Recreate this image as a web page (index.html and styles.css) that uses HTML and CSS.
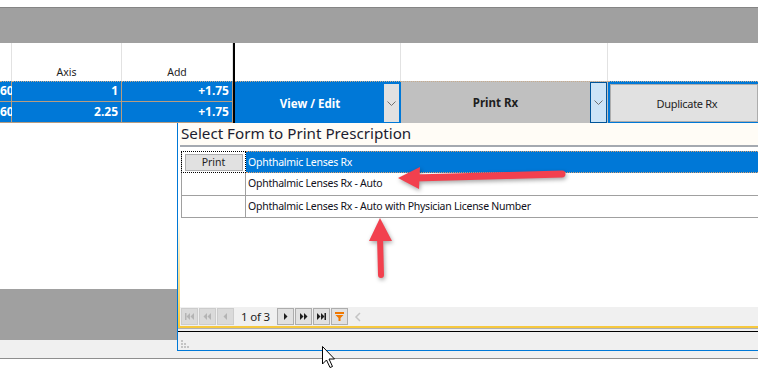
FILE: index.html
```html
<!DOCTYPE html>
<html lang="en">
<head>
  <meta charset="UTF-8">
  <meta name="viewport" content="width=device-width, initial-scale=1.0">
  <title>Select Form to Print Prescription</title>
  <link rel="stylesheet" href="styles.css">
</head>
<body>
  <div class="screen">
    <div class="top-gap"></div>
    <div class="band"></div>

    <div class="rx-grid">
      <div class="hd"></div>
      <div class="hd">Axis</div>
      <div class="hd">Add</div>
      <div class="split"></div>
      <div class="hd"></div>
      <div class="hd"></div>
      <div class="hd hd-last"></div>

      <div class="dc first">60</div>
      <div class="dc first">1</div>
      <div class="dc first">+1.75</div>
      <div class="act act-view">
        <span class="act-label">View / Edit</span>
        <span class="chev chev-gray">
          <svg width="9" height="5" viewBox="0 0 9 5"><polyline points="0.5,0.5 4.5,4.5 8.5,0.5" fill="none" stroke="#707070"/></svg>
        </span>
      </div>
      <div class="act act-print">
        <span class="act-label">Print Rx</span>
        <span class="chev chev-blue">
          <svg width="9" height="5" viewBox="0 0 9 5"><polyline points="0.5,0.5 4.5,4.5 8.5,0.5" fill="none" stroke="#707070"/></svg>
        </span>
      </div>
      <div class="act act-dup">
        <span class="dup-btn">Duplicate Rx</span>
      </div>

      <div class="dc">60</div>
      <div class="dc">2.25</div>
      <div class="dc">+1.75</div>
    </div>

    <div class="lower">
      <div class="left-pane">
        <div class="left-white"></div>
        <div class="left-gray"></div>
        <div class="left-light"></div>
      </div>

      <div class="popup">
        <div class="frame">
          <div class="frame-inner">
            <div class="popup-title">Select Form to Print Prescription</div>
            <div class="form-area">
              <div class="form-list">
                <div class="form-row selected">
                  <div class="sel-cell"><span class="print-btn">Print</span></div>
                  <div class="name-cell">Ophthalmic Lenses Rx</div>
                </div>
                <div class="form-row">
                  <div class="sel-cell"></div>
                  <div class="name-cell">Ophthalmic Lenses Rx - Auto</div>
                </div>
                <div class="form-row">
                  <div class="sel-cell"></div>
                  <div class="name-cell">Ophthalmic Lenses Rx - Auto with Physician License Number</div>
                </div>
              </div>
            </div>
            <div class="pager">
              <span class="pg-btn off">
                <svg width="15" height="15" viewBox="0 0 15 15"><rect x="3" y="4" width="1.5" height="7"/><polygon points="8,4 4.5,7.5 8,11"/><polygon points="12,4 8.5,7.5 12,11"/></svg>
              </span>
              <span class="pg-btn off">
                <svg width="15" height="15" viewBox="0 0 15 15"><polygon points="7,4 3.5,7.5 7,11"/><polygon points="11,4 7.5,7.5 11,11"/></svg>
              </span>
              <span class="pg-btn off">
                <svg width="15" height="15" viewBox="0 0 15 15"><polygon points="9,4 5.5,7.5 9,11"/></svg>
              </span>
              <span class="pg-text">1 of 3</span>
              <span class="pg-btn">
                <svg width="15" height="15" viewBox="0 0 15 15"><polygon points="6,4 9.5,7.5 6,11"/></svg>
              </span>
              <span class="pg-btn">
                <svg width="15" height="15" viewBox="0 0 15 15"><polygon points="4,4 7.5,7.5 4,11"/><polygon points="8,4 11.5,7.5 8,11"/></svg>
              </span>
              <span class="pg-btn">
                <svg width="15" height="15" viewBox="0 0 15 15"><polygon points="3,4 6.5,7.5 3,11"/><polygon points="7,4 10.5,7.5 7,11"/><rect x="10.5" y="4" width="1.5" height="7"/></svg>
              </span>
              <span class="pg-btn">
                <svg width="15" height="15" viewBox="0 0 15 15"><rect x="3" y="3" width="9" height="2" fill="#f07800"/><path d="M3.5 6 H11.5 L8.5 9 V12 H6.5 V9 Z" fill="#f07800"/></svg>
              </span>
              <span class="pg-back">
                <svg width="8" height="10" viewBox="0 0 8 10"><polyline points="6,1 2,5 6,9" fill="none" stroke="#c4c4c4" stroke-width="1.5"/></svg>
              </span>
            </div>
          </div>
        </div>
        <div class="grip-bar">
          <svg class="grip" width="10" height="8" viewBox="0 0 10 8">
            <rect x="0" y="0" width="2" height="2"/>
            <rect x="0" y="3" width="2" height="2"/><rect x="3" y="3" width="2" height="2"/>
            <rect x="0" y="6" width="2" height="2"/><rect x="3" y="6" width="2" height="2"/><rect x="6" y="6" width="2" height="2"/>
          </svg>
        </div>
      </div>
    </div>
    <div class="bottom-strip"></div>

    <svg class="marks" width="758" height="388" viewBox="0 0 758 388">
      <g class="arrows">
        <line x1="562" y1="174" x2="414" y2="178" stroke="#f2404e" stroke-width="7" stroke-linecap="round"/>
        <polygon points="398,178 420,167 419,189" fill="#f2404e"/>
        <line x1="381" y1="275" x2="380" y2="236" stroke="#f2404e" stroke-width="6" stroke-linecap="round"/>
        <polygon points="380,218 369,241 392,241" fill="#f2404e"/>
      </g>
      <path class="cursor" d="M322.5 346.5 V364 L326.5 360 L330 367.5 L332.5 366.5 L329 359 L334.5 359 Z"/>
    </svg>
  </div>
</body>
</html>
```

FILE: styles.css
```css
* {
  box-sizing: border-box;
}
body {
  margin: 0;
  font-family: "Noto Sans", sans-serif;
  font-size: 11px;
  color: #1e1e1e;
  background: #fff;
  overflow: hidden;
}
.screen {
  position: relative;
  width: 758px;
  height: 388px;
}
.top-gap {
  height: 7px;
}
.band {
  height: 36px;
  background: #a0a0a0;
  border-top: 1px solid #858585;
}

/* prescription grid */
.rx-grid {
  display: grid;
  grid-template-columns: 12px 110px 111px 2px 166px 207px 150px;
  grid-template-rows: 38px 21px 21px;
}
.hd {
  display: flex;
  align-items: flex-end;
  justify-content: center;
  padding-bottom: 1px;
  border-right: 1px solid #e2e2e2;
  line-height: 16px;
  font-size: 10.5px;
}
.hd-last {
  border-right: none;
}
.split {
  grid-row: 1 / 4;
  grid-column: 4;
  background: #000;
}
.dc {
  background: #0078d7;
  color: #fff;
  font-weight: bold;
  font-size: 12px;
  text-align: right;
  padding-right: 3px;
  line-height: 19px;
  border-right: 1px solid #b89c80;
  border-bottom: 1px solid #b89c80;
}
.dc.first {
  border-top: 1px dotted #c8ab8c;
  line-height: 18px;
}
.act {
  grid-row: 2 / 4;
  display: flex;
  border-top: 1px dotted #c8ab8c;
}
.act-label {
  flex: 1;
  display: flex;
  align-items: center;
  justify-content: center;
  font-weight: bold;
  font-size: 11.5px;
}
.act-view {
  grid-column: 5;
  background: #0078d7;
  color: #fff;
  padding: 1px 1px 0 0;
}
.act-view .act-label {
  padding-left: 2px;
}
.chev {
  width: 17px;
  display: flex;
  align-items: center;
  justify-content: center;
}
.chev-gray {
  background: #e1e1e1;
  border: 1px solid #0078d7;
}
.act-print {
  grid-column: 6;
  background: #c0c0c0;
  color: #1e1e1e;
  padding-right: 1px;
}
.chev-blue {
  background: #cce4f7;
  border: 1px solid #005499;
}
.act-dup {
  grid-column: 7;
  background: #0078d7;
  padding: 2px 0 1px 2px;
  display: flex;
}
.dup-btn {
  flex: 1;
  display: flex;
  align-items: center;
  justify-content: center;
  padding-left: 6px;
  background: #e1e1e1;
  border: 1px solid #adadad;
  font-size: 11px;
  letter-spacing: -0.3px;
}

/* lower area */
.lower {
  display: flex;
  height: 228px;
}
.left-pane {
  width: 177px;
  display: flex;
  flex-direction: column;
}
.left-white {
  height: 166px;
}
.left-gray {
  height: 51px;
  background: #a0a0a0;
}
.left-light {
  flex: 1;
  background: #f0f0f0;
}
.bottom-strip {
  height: 8px;
  background: #f0f0f0;
  border-bottom: 1px solid #8e8e8e;
}

/* popup */
.popup {
  flex: 1;
  display: flex;
  flex-direction: column;
  border-left: 1px solid #0078d7;
  border-bottom: 1px solid #0078d7;
  background: #f0f0f0;
}
.frame {
  height: 206px;
  padding: 0 0 2px 2px;
  background: linear-gradient(to bottom, #ffffff 45%, #f6c83c 100%);
  border-bottom: 1px solid #b0b0b0;
}
.frame-inner {
  height: 100%;
  display: flex;
  flex-direction: column;
  background: #fff;
}
.popup-title {
  height: 24px;
  padding-left: 1px;
  background: #fffcf6;
  border-bottom: 2px solid #a4a9b0;
  font-size: 15.2px;
  line-height: 21px;
  color: #1c1c30;
}
.form-area {
  flex: 1;
  padding: 4px 0 0 1px;
}
.form-list {
  border-left: 1px solid #a0a0a0;
}
.form-row {
  display: flex;
  height: 22px;
  border-bottom: 1px solid #a0a0a0;
}
.form-row:nth-child(2) {
  height: 23px;
}
.sel-cell {
  width: 64px;
  border-right: 1px solid #a0a0a0;
  display: flex;
  align-items: center;
  justify-content: center;
}
.name-cell {
  flex: 1;
  padding-left: 2px;
  line-height: 21px;
  font-size: 10.5px;
  letter-spacing: -0.25px;
  color: #101020;
}
.form-row.selected {
  border-bottom: none;
}
.form-row.selected .sel-cell {
  width: 65px;
  margin-left: -1px;
  border: 1px dotted #000;
}
.form-row.selected .name-cell {
  background: #0078d7;
  color: #fff;
  border-top: 1px dotted #d8a070;
  border-bottom: 1px dotted #d8a070;
  line-height: 20px;
}
.print-btn {
  width: 58px;
  height: 17px;
  background: #e1e1e1;
  border: 1px solid #adadad;
  text-align: center;
  line-height: 15px;
  font-size: 10.5px;
}
.pager {
  height: 19px;
  background: #f0f0f0;
  display: flex;
  align-items: center;
  gap: 1px;
  padding-left: 1px;
}
.pg-btn {
  width: 17px;
  height: 17px;
  display: flex;
  align-items: center;
  justify-content: center;
  background: #e1e1e1;
  border: 1px solid #adadad;
  fill: #1e1e1e;
}
.pg-btn.off {
  background: #dadada;
  border-color: #cccccc;
  fill: #b4b4b4;
}
.pg-text {
  width: 41px;
  padding-left: 6px;
  font-size: 11.5px;
  letter-spacing: -0.2px;
  color: #1e1e1e;
}
.pg-back {
  margin-left: 5px;
  display: flex;
}
.grip-bar {
  flex: 1;
  border-top: 1px solid #000;
  margin-top: 2px;
  padding: 8px 0 0 3px;
}
.grip {
  fill: #c4c4c4;
  display: block;
}

/* annotations */
.marks {
  position: absolute;
  left: 0;
  top: 0;
  pointer-events: none;
}
.arrows {
  filter: drop-shadow(1px 2px 2px rgba(0, 0, 0, 0.35));
}
.cursor {
  fill: #fff;
  stroke: #000;
  stroke-width: 1;
}
```
